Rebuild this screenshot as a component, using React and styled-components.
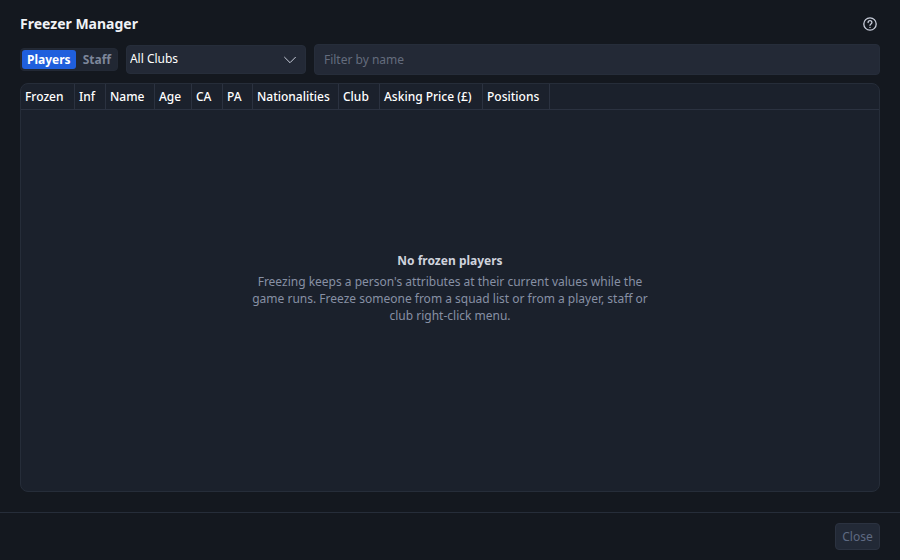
import React, { useState } from 'react';
import styled, { createGlobalStyle } from 'styled-components';

const Global = createGlobalStyle`
  *, *::before, *::after { box-sizing: border-box; }
  body { margin: 0; background: #14181f; color: #f0f2f6; }
  body, button, input, select { font-family: "Noto Sans", sans-serif; font-size: 12px; }
`;

const Page = styled.div`
  display: flex;
  flex-direction: column;
  min-height: 100vh;
`;

const Header = styled.header`
  display: flex;
  align-items: center;
  justify-content: space-between;
  padding: 14px 20px 10px;
`;

const Title = styled.h1`
  margin: 0;
  font-size: 14px;
  line-height: 20px;
  font-weight: 700;
`;

const IconButton = styled.button`
  display: flex;
  padding: 3px;
  border: 0;
  background: none;
  color: #c9cedb;
`;

const Toolbar = styled.div`
  display: flex;
  align-items: center;
  gap: 8px;
  padding: 0 20px 8px;
`;

const Segmented = styled.div`
  display: flex;
  gap: 2px;
  padding: 1px;
  border: 1px solid #232935;
  border-radius: 4px;
  background: #212733;
`;

const Segment = styled.button`
  height: 19px;
  padding: 0 5px;
  border: 0;
  border-radius: 3px;
  font-weight: 700;
  line-height: 19px;
  background: ${(p) => (p.$active ? '#1f5fdd' : 'transparent')};
  color: ${(p) => (p.$active ? '#fff' : '#7d869a')};
`;

const SelectWrap = styled.div`
  display: grid;
  align-items: center;
  width: 180px;
  & > * { grid-area: 1 / 1; }
  svg { justify-self: end; margin-right: 9px; pointer-events: none; }
`;

const ClubSelect = styled.select`
  appearance: none;
  width: 100%;
  height: 29px;
  padding: 0 3px 2px;
  border: 1px solid #262d3a;
  border-radius: 4px;
  background: #232936;
  color: #fff;
`;

const Filter = styled.input`
  flex: 1;
  min-width: 0;
  height: 31px;
  padding: 0 9px;
  border: 1px solid #262d3a;
  border-radius: 4px;
  background: #232936;
  color: #fff;
  &::placeholder { color: #646c7d; opacity: 1; }
`;

const Panel = styled.main`
  display: flex;
  flex: 1;
  flex-direction: column;
  margin: 0 20px 20px;
  overflow: hidden;
  border: 1px solid #262d39;
  border-radius: 8px;
  background: #1b212c;
`;

const HeaderBand = styled.div`
  border-bottom: 1px solid #2b3240;
`;

const Table = styled.table`
  width: min-content;
  table-layout: fixed;
  border-collapse: separate;
  border-spacing: 0;
`;

const Th = styled.th`
  width: ${(p) => p.$width}px;
  height: 25px;
  padding: 0 0 0 4px;
  border-right: 1px solid #2b3240;
  color: #fff;
  font-weight: 500;
  text-align: left;
  white-space: nowrap;
`;

const Empty = styled.section`
  display: flex;
  flex: 1;
  flex-direction: column;
  align-items: center;
  justify-content: center;
  padding-bottom: 26px;
  text-align: center;
`;

const EmptyTitle = styled.h2`
  margin: 0 0 3px;
  font-size: 12px;
  line-height: 18px;
  font-weight: 700;
  color: #cfd3dd;
`;

const EmptyText = styled.p`
  max-width: 400px;
  margin: 0;
  line-height: 17px;
  color: #8790a4;
`;

const Footer = styled.footer`
  display: flex;
  justify-content: flex-end;
  padding: 10px 20px;
  border-top: 1px solid #262d39;
`;

const CloseButton = styled.button`
  min-width: 45px;
  height: 27px;
  padding: 0 6px;
  border: 1px solid #2b3240;
  border-radius: 4px;
  background: #222936;
  color: #5f6a82;
`;

const columns = [
  ['Frozen', 54],
  ['Inf', 31],
  ['Name', 49],
  ['Age', 37],
  ['CA', 31],
  ['PA', 30],
  ['Nationalities', 86],
  ['Club', 41],
  ['Asking Price (£)', 103],
  ['Positions', 67],
];

export default function App() {
  const [kind, setKind] = useState('Players');
  return (
    <Page>
      <Global />
      <Header>
        <Title>Freezer Manager</Title>
        <IconButton type="button" aria-label="Help">
          <svg width="14" height="14" viewBox="0 0 14 14" fill="none" stroke="currentColor" strokeWidth="1.3" strokeLinecap="round">
            <circle cx="7" cy="7" r="6.2" />
            <path d="M5.1 5.5a1.9 1.9 0 0 1 3.8 0c0 1.4-1.9 1.5-1.9 2.8" />
            <path d="M7 10.3v.1" />
          </svg>
        </IconButton>
      </Header>
      <Toolbar>
        <Segmented role="group" aria-label="Person type">
          {['Players', 'Staff'].map((k) => (
            <Segment key={k} type="button" $active={k === kind} aria-pressed={k === kind} onClick={() => setKind(k)}>
              {k}
            </Segment>
          ))}
        </Segmented>
        <SelectWrap>
          <ClubSelect aria-label="Club">
            <option>All Clubs</option>
          </ClubSelect>
          <svg width="14" height="14" viewBox="0 0 14 14" fill="none" stroke="#c9cedb">
            <path d="M1.3 4l5.7 5.7L12.7 4" />
          </svg>
        </SelectWrap>
        <Filter aria-label="Filter by name" placeholder="Filter by name" />
      </Toolbar>
      <Panel>
        <HeaderBand>
          <Table>
            <thead>
              <tr>
                {columns.map(([label, width]) => (
                  <Th key={label} scope="col" $width={width}>{label}</Th>
                ))}
              </tr>
            </thead>
          </Table>
        </HeaderBand>
        <Empty>
          <EmptyTitle>No frozen {kind.toLowerCase()}</EmptyTitle>
          <EmptyText>
            Freezing keeps a person's attributes at their current values while the game runs. Freeze someone from a
            squad list or from a player, staff or club right-click menu.
          </EmptyText>
        </Empty>
      </Panel>
      <Footer>
        <CloseButton type="button" disabled>Close</CloseButton>
      </Footer>
    </Page>
  );
}
